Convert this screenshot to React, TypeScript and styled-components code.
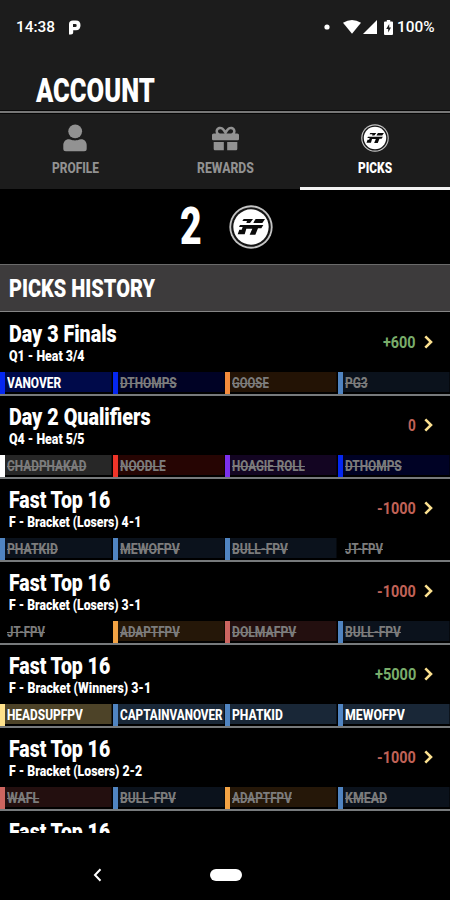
import React, { useLayoutEffect, useRef, useState } from "react";
import styled, { createGlobalStyle } from "styled-components";
import { FaGift } from "react-icons/fa";

const Global = createGlobalStyle`
  * { box-sizing: border-box; }
  body { margin: 0; background: #000; font-family: Roboto, "Liberation Sans", sans-serif; }
`;

/* ---------- condensed text: squeezed horizontally to a given width ---------- */

const CondensedBox = styled.span<{ $width: number; $size: number; $weight: number }>`
  display: block;
  flex: none;
  width: ${(p) => p.$width}px;
  font-size: ${(p) => p.$size}px;
  font-weight: ${(p) => p.$weight};
  white-space: nowrap;
`;

const CondensedInner = styled.span<{ $struck?: boolean }>`
  display: inline-block;
  transform-origin: 0 50%;
  text-decoration: ${(p) => (p.$struck ? "line-through" : "none")};
  text-decoration-thickness: 1px;
`;

interface CondensedProps {
  children: string;
  width: number;
  size: number;
  weight?: number;
  struck?: boolean;
}

function Condensed({ children, width, size, weight = 900, struck }: CondensedProps) {
  const ref = useRef<HTMLSpanElement>(null);
  const [scale, setScale] = useState(1);
  useLayoutEffect(() => {
    if (ref.current) setScale(width / ref.current.offsetWidth);
  }, [children, width, size]);
  return (
    <CondensedBox $width={width} $size={size} $weight={weight}>
      <CondensedInner ref={ref} $struck={struck} style={{ transform: `scaleX(${scale})` }}>
        {children}
      </CondensedInner>
    </CondensedBox>
  );
}

/* ---------- layout ---------- */

const Screen = styled.div`
  width: 450px;
  height: 900px;
  display: flex;
  flex-direction: column;
  background: #000;
  color: #fff;
  overflow: hidden;
`;

const StatusBar = styled.div`
  height: 54px;
  flex: none;
  display: flex;
  align-items: center;
  padding: 0 15px 0 16px;
  background: #1c1c1c;
  line-height: 20px;
`;

const StatusSide = styled.div`
  display: flex;
  align-items: center;
`;

const Spacer = styled.div`
  flex: 1;
`;

const StatusIcon = styled.svg<{ $gap: number }>`
  display: block;
  flex: none;
  margin-left: ${(p) => p.$gap}px;
`;

const TitleBar = styled.header`
  height: 60px;
  flex: none;
  padding: 16px 0 0 36px;
  line-height: 42px;
  background: #1c1c1c;
  border-bottom: 1px solid #060606;
  box-shadow: inset 0 -2px 0 #777, inset 0 -3px 0 #080808;
`;

const Tabs = styled.nav`
  height: 75px;
  flex: none;
  display: grid;
  grid-template-columns: repeat(3, 1fr);
  background: #1c1c1c;
`;

const Tab = styled.div<{ $active?: boolean }>`
  height: 76px;
  display: flex;
  flex-direction: column;
  align-items: center;
  padding-top: 8px;
  line-height: 20px;
  color: ${(p) => (p.$active ? "#fff" : "#929292")};
  border-bottom: 3px solid ${(p) => (p.$active ? "#f2f2f2" : "transparent")};
`;

const TabIcon = styled.div`
  height: 32px;
  margin-bottom: 4px;
  display: flex;
  align-items: center;
  justify-content: center;
`;

const Score = styled.section`
  height: 75px;
  flex: none;
  display: flex;
  align-items: center;
  padding-left: 180px;
  gap: 27px;
  line-height: 60px;
`;

const SectionHeader = styled.h2`
  height: 48px;
  flex: none;
  margin: 0;
  padding-left: 9px;
  display: flex;
  align-items: center;
  line-height: 32px;
  background: #3d3b3c;
  border-top: 1px solid #6b6b6b;
  border-bottom: 1px solid #858585;
`;

const History = styled.main`
  height: 521px;
  flex: none;
  padding-top: 1px;
  overflow: hidden;
`;

const Entry = styled.article`
  height: 83px;
  display: flex;
  flex-direction: column;
  border-bottom: 2px solid #777a7c;
`;

const Summary = styled.div`
  height: 59px;
  flex: none;
  display: flex;
  align-items: center;
  padding: 0 17px 2px 0;
`;

const Names = styled.div`
  height: 57px;
  flex: 1;
  padding: 8px 0 0 9px;
`;

const EventName = styled.div`
  line-height: 26px;
`;

const HeatName = styled.div`
  line-height: 20px;
`;

const Amount = styled.div<{ $tone: Tone }>`
  color: ${(p) => (p.$tone === "gain" ? "#79ad6b" : "#c06257")};
  line-height: 20px;
  margin-right: 8px;
`;

const Chips = styled.div`
  height: 22px;
  display: grid;
  grid-template-columns: repeat(4, 112.5px);
`;

const Chip = styled.div<{ $bar: string; $fill: string; $hit?: boolean }>`
  display: flex;
  align-items: center;
  height: 22px;
  padding-left: 2px;
  border-left: 5px solid ${(p) => p.$bar};
  background: linear-gradient(${(p) => p.$fill}, ${(p) => p.$fill}) 0 0 / 106.5px 20px no-repeat;
  color: ${(p) => (p.$hit ? "#fff" : "#7c7c7c")};
  line-height: 20px;
`;

const SystemNav = styled.footer`
  height: 67px;
  flex: none;
  display: flex;
  align-items: center;
  padding: 17px 0 0 93px;
`;

const HomePill = styled.div`
  width: 32px;
  height: 12px;
  margin-left: 108px;
  border-radius: 6px;
  background: #fff;
`;

/* ---------- icons ---------- */

const Coin = ({ size }: { size: number }) => (
  <svg width={size} height={size} viewBox="0 0 132 132">
    <circle cx="66" cy="66" r="65" fill="#c4c4c4" />
    <circle cx="66" cy="66" r="59.5" fill="#151515" />
    <circle cx="66" cy="66" r="53" fill="#fff" />
    <path
      d="M44 42H72L63 54H52L54 48H40ZM80 42H108L100 54H73L76 48ZM33 60H103L97 70H87L79 89H62L70 71H52L47 88H26L31 74H38L41 66H30Z"
      fill="#0a0a0a"
    />
  </svg>
);

const Person = () => (
  <svg width="24" height="28" viewBox="0 0 24 28" fill="#929292">
    <circle cx="12.2" cy="7.3" r="6.9" />
    <path d="M5.8 15.3C7.5 15.3 8.2 16.4 12 16.4S16.500 15.300 18.200 15.300C21.600 15.300 23.700 18 23.700 21.300V24.800Q23.700 27.300 21.200 27.300H2.800Q.3 27.300 .3 24.800V21.300C.3 18 2.400 15.300 5.800 15.300Z" />
  </svg>
);

const Chevron = () => (
  <svg width="9" height="14" viewBox="0 0 9 14" fill="none" stroke="#fbe08f" strokeWidth="2.6">
    <path d="M1.300 1.300L7 7L1.300 12.700" />
  </svg>
);

/* ---------- data ---------- */

type Tone = "gain" | "loss";
type Hue = "navy" | "orange" | "steel" | "white" | "red" | "violet" | "none" | "amber" | "rose" | "cream";
type Pick = [name: string, width: number, hue: Hue, hit?: boolean];

const hues: Record<Hue, { bar: string; dim: string; lit: string }> = {
  navy: { bar: "#0527f0", dim: "#000225", lit: "#000a4a" },
  orange: { bar: "#f58b3c", dim: "#231305", lit: "#4a2b10" },
  steel: { bar: "#5084c1", dim: "#0b121c", lit: "#192737" },
  white: { bar: "#ffffff", dim: "#272727", lit: "#444444" },
  red: { bar: "#ef3529", dim: "#260503", lit: "#4a0c08" },
  violet: { bar: "#7c30ed", dim: "#130522", lit: "#280c48" },
  none: { bar: "#000000", dim: "#000000", lit: "#000000" },
  amber: { bar: "#f3a344", dim: "#251708", lit: "#4a3010" },
  rose: { bar: "#cd6560", dim: "#230f0f", lit: "#462020" },
  cream: { bar: "#ffe28b", dim: "#282214", lit: "#4d4328" },
};

interface HistoryEntry {
  event: [string, number];
  heat: [string, number];
  amount: [string, number];
  tone: Tone;
  picks: Pick[];
}

const entries: HistoryEntry[] = [
  {
    event: ["Day 3 Finals", 108], heat: ["Q1 - Heat 3/4", 75], amount: ["+600", 33], tone: "gain",
    picks: [["VANOVER", 54, "navy", true], ["DTHOMPS", 57, "navy"], ["GOOSE", 37, "orange"], ["PG3", 23, "steel"]],
  },
  {
    event: ["Day 2 Qualifiers", 142], heat: ["Q4 - Heat 5/5", 75], amount: ["0", 8], tone: "loss",
    picks: [["CHADPHAKAD", 79, "white"], ["NOODLE", 46, "red"], ["HOAGIE ROLL", 73, "violet"], ["DTHOMPS", 57, "navy"]],
  },
  {
    event: ["Fast Top 16", 101], heat: ["F - Bracket (Losers) 4-1", 132], amount: ["-1000", 39], tone: "loss",
    picks: [["PHATKID", 51, "steel"], ["MEWOFPV", 60, "steel"], ["BULL-FPV", 56, "steel"], ["JT-FPV", 38, "none"]],
  },
  {
    event: ["Fast Top 16", 101], heat: ["F - Bracket (Losers) 3-1", 132], amount: ["-1000", 39], tone: "loss",
    picks: [["JT-FPV", 38, "none"], ["ADAPTFPV", 60, "amber"], ["DOLMAFPV", 64, "rose"], ["BULL-FPV", 56, "steel"]],
  },
  {
    event: ["Fast Top 16", 101], heat: ["F - Bracket (Winners) 3-1", 142], amount: ["+5000", 41], tone: "gain",
    picks: [["HEADSUPFPV", 76, "cream", true], ["CAPTAINVANOVER", 103, "steel", true], ["PHATKID", 51, "steel", true], ["MEWOFPV", 60, "steel", true]],
  },
  {
    event: ["Fast Top 16", 101], heat: ["F - Bracket (Losers) 2-2", 133], amount: ["-1000", 39], tone: "loss",
    picks: [["WAFL", 32, "rose"], ["BULL-FPV", 56, "steel"], ["ADAPTFPV", 60, "amber"], ["KMEAD", 42, "steel"]],
  },
];

const lastEvent: [string, number] = ["Fast Top 16", 101];

function EntryRow({ entry }: { entry: HistoryEntry }) {
  return (
    <Entry>
      <Summary>
        <Names>
          <EventName>
            <Condensed width={entry.event[1]} size={23.5}>{entry.event[0]}</Condensed>
          </EventName>
          <HeatName>
            <Condensed width={entry.heat[1]} size={14.5}>{entry.heat[0]}</Condensed>
          </HeatName>
        </Names>
        <Amount $tone={entry.tone}>
          <Condensed width={entry.amount[1]} size={17} weight={700}>{entry.amount[0]}</Condensed>
        </Amount>
        <Chevron />
      </Summary>
      <Chips>
        {entry.picks.map(([name, width, hue, hit]) => (
          <Chip key={name} $bar={hues[hue].bar} $fill={hit ? hues[hue].lit : hues[hue].dim} $hit={hit}>
            <Condensed width={width} size={15} weight={800} struck={!hit}>{name}</Condensed>
          </Chip>
        ))}
      </Chips>
    </Entry>
  );
}

export default function App() {
  return (
    <>
      <Global />
      <Screen>
        <StatusBar>
          <StatusSide>
            <Condensed width={39} size={15} weight={500}>14:38</Condensed>
            <StatusIcon $gap={14} width="12" height="15" viewBox="0 0 12 15">
              <path
                d="M0 14.500V4Q0 .5 4 .5H7Q11.500 .5 11.500 5.300Q11.500 10.300 7 10.300H4.200V12.500Q4.200 14.500 2 14.500ZM4 4V7H6.300Q7.700 7 7.700 5.400Q7.700 4 6.300 4Z"
                fill="#fff"
                fillRule="evenodd"
              />
            </StatusIcon>
          </StatusSide>
          <Spacer />
          <StatusSide>
            <StatusIcon $gap={0} width="6" height="6" viewBox="0 0 6 6" fill="#fff">
              <circle cx="3" cy="3" r="2.600" />
            </StatusIcon>
            <StatusIcon $gap={13} width="18" height="14" viewBox="0 0 18 14" fill="#fff">
              <path d="M0 2.800Q9-2.800 18 2.800L9 13.800Z" />
            </StatusIcon>
            <StatusIcon $gap={2} width="14" height="14" viewBox="0 0 14 14" fill="#fff">
              <path d="M14 0V14H0Z" />
            </StatusIcon>
            <StatusIcon $gap={7} width="9" height="15" viewBox="0 0 9 15">
              <path d="M2.800 0H6.200V1.500H8Q9 1.500 9 2.500V14Q9 15 8 15H1Q0 15 0 14V2.500Q0 1.500 1 1.500H2.800Z" fill="#fff" />
              <path d="M5.200 4L2.200 9H4.200V12.500L7 7.500H5.200Z" fill="#1c1c1c" />
            </StatusIcon>
            <StatusIcon $gap={3} width="1" height="1" />
            <Condensed width={38} size={15} weight={500}>100%</Condensed>
          </StatusSide>
        </StatusBar>
        <TitleBar>
          <Condensed width={119} size={33}>ACCOUNT</Condensed>
        </TitleBar>
        <Tabs>
          <Tab>
            <TabIcon><Person /></TabIcon>
            <Condensed width={47} size={15} weight={800}>PROFILE</Condensed>
          </Tab>
          <Tab>
            <TabIcon><FaGift size={27} color="#929292" /></TabIcon>
            <Condensed width={57} size={15} weight={800}>REWARDS</Condensed>
          </Tab>
          <Tab $active>
            <TabIcon><Coin size={28} /></TabIcon>
            <Condensed width={34} size={15}>PICKS</Condensed>
          </Tab>
        </Tabs>
        <Score>
          <Condensed width={22} size={51}>2</Condensed>
          <Coin size={44} />
        </Score>
        <SectionHeader>
          <Condensed width={146} size={26.5}>PICKS HISTORY</Condensed>
        </SectionHeader>
        <History>
          {entries.map((entry, i) => (
            <EntryRow key={i} entry={entry} />
          ))}
          <Names>
            <EventName>
              <Condensed width={lastEvent[1]} size={23.5}>{lastEvent[0]}</Condensed>
            </EventName>
          </Names>
        </History>
        <SystemNav>
          <svg width="9" height="14" viewBox="0 0 9 14" fill="none" stroke="#fff" strokeWidth="2">
            <path d="M7.500 1.300L2 7L7.500 12.700" />
          </svg>
          <HomePill />
        </SystemNav>
      </Screen>
    </>
  );
}
